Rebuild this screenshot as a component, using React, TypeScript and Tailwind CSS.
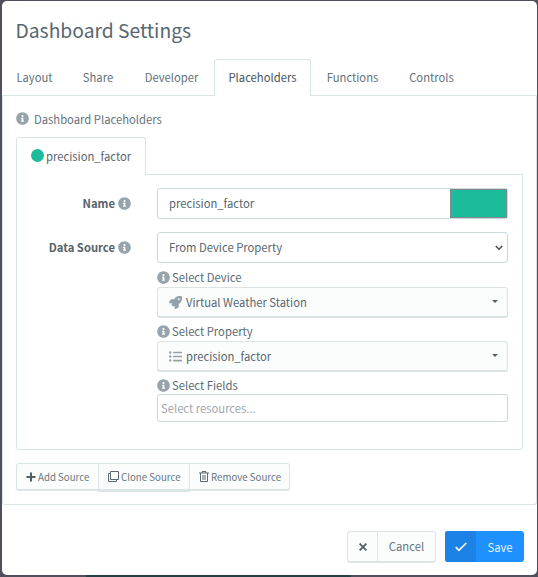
import { ReactNode } from "react";
import { FaInfoCircle, FaListUl, FaRocket } from "react-icons/fa";

const TABS = [
  { name: "Layout", width: "w-[65px]" },
  { name: "Share", width: "w-[62px]" },
  { name: "Developer", width: "w-[85px]" },
  { name: "Placeholders", width: "w-[97px]" },
  { name: "Functions", width: "w-[83px]" },
  { name: "Controls", width: "w-[75px]" },
];

function Info() {
  return <FaInfoCircle className="size-[13px] shrink-0 text-[#97a4ab]" />;
}

function Label({ children }: { children: ReactNode }) {
  return (
    <div className="flex h-4 items-center gap-[2px] text-[#5c6b73]">
      <Info />
      <span>{children}</span>
    </div>
  );
}

function Picker({ icon, children }: { icon: ReactNode; children: ReactNode }) {
  return (
    <button className="flex h-[31px] w-[351px] items-center rounded-[3px] border border-b-2 border-[#dbe3e4] bg-[#fbfdfd] pl-[11px] pr-[9px] text-[#58666e]">
      <span className="w-[17px] text-[#94a1a8]">{icon}</span>
      <span className="flex-1 text-left">{children}</span>
      <span className="mb-px border-x-[3px] border-t-[3px] border-x-transparent border-t-[#52616a]" />
    </button>
  );
}

function FieldName({ children }: { children: ReactNode }) {
  return (
    <div className="flex h-[30px] w-[114px] items-center justify-end gap-[3px] font-bold text-[#55626a]">
      <span>{children}</span>
      <Info />
    </div>
  );
}

export default function App() {
  return (
    <div className="h-[577px] w-[538px] overflow-hidden bg-[#50505c] pl-[2px] pt-px font-['Noto_Sans_CJK_SC',sans-serif] text-[11.25px] leading-4 text-[#58666e]">
      <div className="h-[574px] w-[535px] rounded-[5px] bg-white">
        <h1 className="h-[58px] pl-[13.5px] pt-[14px] text-[19.3px] leading-[30px] text-[#58666e]">Dashboard Settings</h1>
        <nav className="flex h-[37px] border-b border-[#dbe5e6]">
          {TABS.map((tab) => (
            <button
              key={tab.name}
              className={
                tab.name === "Placeholders"
                  ? `${tab.width} h-[37px] shrink-0 rounded-t-[3px] border border-b-0 border-[#dbe5e6] bg-white pb-[2px] text-[#48545b]`
                  : `${tab.width} h-[37px] shrink-0 pb-px text-[#647179]`
              }
            >
              {tab.name}
            </button>
          ))}
        </nav>
        <main className="h-[409px] rounded-b-[3px] border border-t-0 border-[#dbe5e6] px-[13px] pt-[14px]">
          <div className="flex h-[17px] items-center gap-[5px] text-[#65727a]">
            <Info />
            <span>Dashboard Placeholders</span>
          </div>
          <div className="mt-[10px] flex">
            <div className="relative z-10 -mb-px flex h-[38px] w-[130px] items-center gap-[3px] rounded-t-[3px] border border-b-0 border-[#dbe5e6] bg-white pb-[2px] pl-[14px]">
              <span className="size-[13px] rounded-full bg-[#1cbb9b]" />
              <span className="-ml-px">precision_factor</span>
            </div>
          </div>
          <section className="h-[276px] w-[507px] rounded-b-[3px] border border-[#dbe5e6] pt-[13px]">
            <div className="flex gap-[26px]">
              <FieldName>Name</FieldName>
              <div className="flex h-[31px] w-[351px] items-center rounded-[3px] border border-[#ccd9dc] pl-[11px]">
                <span className="w-[281px] pb-px">precision_factor</span>
                <span className="h-[29px] w-[57px] border border-[#7f8a8b] bg-[#1cbb9b]" />
              </div>
            </div>
            <div className="mt-[13px] flex gap-[26px]">
              <FieldName>Data Source</FieldName>
              <div>
                <div className="flex h-[31px] w-[351px] items-center justify-between rounded-[3px] border border-[#ccd9dc] pl-[11px] pr-1">
                  <span className="pb-px">From Device Property</span>
                  <svg width="8" height="6" viewBox="0 0 8 6" fill="none" stroke="#4b5055" strokeWidth="1.6">
                    <path d="M.8 1 4 4.2 7.2 1" />
                  </svg>
                </div>
                <div className="mt-[6px] flex flex-col">
                  <Label>Select Device</Label>
                  <div className="mt-[2px]">
                    <Picker icon={<FaRocket className="size-[13px]" />}>Virtual Weather Station</Picker>
                  </div>
                  <div className="mt-[5px]">
                    <Label>Select Property</Label>
                  </div>
                  <div className="mt-[2px]">
                    <Picker icon={<FaListUl className="size-[13px]" />}>precision_factor</Picker>
                  </div>
                  <div className="mt-[5px]">
                    <Label>Select Fields</Label>
                  </div>
                  <div className="mt-px flex h-7 w-[351px] items-center rounded-[3px] border border-[#ccd9dc] pl-[3px] text-[#a0a8af]">
                    Select resources...
                  </div>
                </div>
              </div>
            </div>
          </section>
          <div className="mt-[13px] flex items-start text-[9.7px] text-[#68757d]">
            <button className="flex h-7 w-[83px] items-center gap-[2px] rounded-l-[3px] border border-b-2 border-[#dbe5e6] bg-[#fbfdfd] pl-[9px]">
              <svg width="10" height="10" viewBox="0 0 10 10" stroke="#505d65" strokeWidth="2">
                <path d="M5 .5v9M.5 5h9" />
              </svg>
              Add Source
            </button>
            <button className="-ml-px flex h-[29px] w-[92px] items-center gap-[2px] border border-b-[3px] border-[#dbe5e6] bg-[#fbfdfd] pl-[9px]">
              <svg width="11" height="11" viewBox="0 0 11 11" fill="none" stroke="#5c6971">
                <path d="M2.5.5h8v8h-8zM2.5 2.5h-2v8h8v-2" />
              </svg>
              Clone Source
            </button>
            <button className="-ml-px flex h-7 w-[101px] items-center gap-[2px] rounded-r-[3px] border border-b-2 border-[#dbe5e6] bg-[#fbfdfd] pl-[9px]">
              <svg width="10" height="11" viewBox="0 0 10 11" fill="none" stroke="#5c6971">
                <path d="M0 2h10M3.2 2V.5h3.6V2M1.5 2v8.5h7V2M4 4v5M6 4v5" />
              </svg>
              Remove Source
            </button>
          </div>
        </main>
        <footer className="flex h-[70px] justify-end gap-[9px] pr-[13px] pt-[26px]">
          <button className="flex h-[32px] w-[89px] rounded-[3px] border border-b-2 border-[#dfe5e5] bg-[#fbfdfd] text-[#68757d]">
            <span className="flex h-full w-[30px] items-center justify-center border-r border-[#dfe5e5]">
              <svg width="8" height="8" viewBox="0 0 8 8" stroke="#515e66" strokeWidth="1.8">
                <path d="m.6.6 6.8 6.8M7.4.6.6 7.4" />
              </svg>
            </span>
            <span className="flex h-full flex-1 items-center justify-center pb-px">Cancel</span>
          </button>
          <button className="flex h-[31px] w-[79px] overflow-hidden rounded-[3px] bg-[#1f91ff] text-[#e4f2ff]">
            <span className="flex h-full w-[31px] items-center justify-center bg-[#1d82e5]">
              <svg width="12" height="10" viewBox="0 0 12 10" fill="none" stroke="white" strokeWidth="1.7">
                <path d="m.7 5.2 3.2 3.2L11.3 1" />
              </svg>
            </span>
            <span className="flex h-full flex-1 items-center justify-center">Save</span>
          </button>
        </footer>
      </div>
      <div className="ml-[84px] h-[2px] w-[265px] bg-[#253f47]" />
    </div>
  );
}
